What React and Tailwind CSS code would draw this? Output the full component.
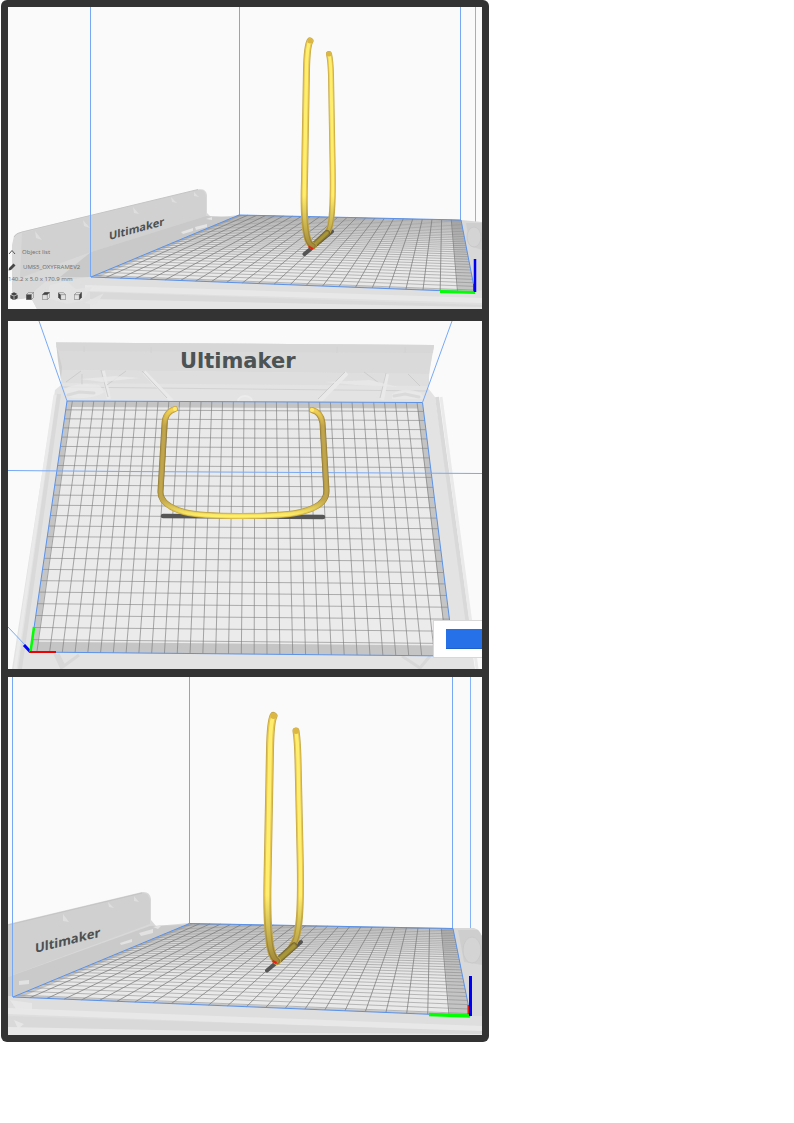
import React from "react";

// Maps the unit square onto a four-cornered plate: a = (0,0), b = (1,0), c = (1,1), d = (0,1).
function projector([a, b, c, d]) {
  const sx = a[0] - b[0] + c[0] - d[0];
  const sy = a[1] - b[1] + c[1] - d[1];
  const x1 = b[0] - c[0], x2 = d[0] - c[0];
  const y1 = b[1] - c[1], y2 = d[1] - c[1];
  const det = x1 * y2 - x2 * y1;
  const g = (sx * y2 - x2 * sy) / det;
  const h = (x1 * sy - sx * y1) / det;
  return (u, v) => {
    const w = g * u + h * v + 1;
    const x = ((b[0] - a[0] + g * b[0]) * u + (d[0] - a[0] + h * d[0]) * v + a[0]) / w;
    const y = ((b[1] - a[1] + g * b[1]) * u + (d[1] - a[1] + h * d[1]) * v + a[1]) / w;
    return `${x.toFixed(2)} ${y.toFixed(2)}`;
  };
}

function Plate({ id, corners, width, depth, uStart, vStart, far, near, line, crossLine, edge }) {
  const p = projector(corners);
  const quad = (u0, v0, u1, v1) => `M${p(u0, v0)}L${p(u1, v0)}L${p(u1, v1)}L${p(u0, v1)}Z`;
  let along = "";
  let across = "";
  for (let u = uStart; u < width; u += 10) along += `M${p(u / width, 0)}L${p(u / width, 1)}`;
  for (let v = vStart; v < depth; v += 10) across += `M${p(0, v / depth)}L${p(1, v / depth)}`;
  const [l, t, r, b] = edge;
  return (
    <g>
      <defs>
        <linearGradient id={id} x1="0" y1="0" x2="0" y2="1">
          <stop offset="0" stopColor={far} />
          <stop offset="0.6" stopColor={near} />
        </linearGradient>
      </defs>
      <path d={quad(0, 0, 1, 1)} fill={`url(#${id})`} />
      <path
        d={quad(0, 0, 1, 1) + quad(l, t, 1 - r, 1 - b)}
        fillRule="evenodd"
        fill="#8c8c8c"
        opacity="0.4"
      />
      <path d={along} fill="none" stroke="#7c7c7c" strokeWidth="0.9" opacity={line} />
      <path d={across} fill="none" stroke="#7c7c7c" strokeWidth="0.8" opacity={crossLine} />
      <path d={quad(0, 0, 1, 1)} fill="none" stroke="#5a92ea" strokeWidth="1" />
    </g>
  );
}

function Rod({ d, width, dark = "#c2a548", mid = "#e6c64c", light = "#ffee6e" }) {
  const common = { d, fill: "none", strokeLinecap: "round", strokeLinejoin: "round" };
  return (
    <g>
      <path {...common} stroke={dark} strokeWidth={width} />
      <path {...common} stroke={mid} strokeWidth={width * 0.8} />
      <path {...common} stroke={light} strokeWidth={width * 0.48} />
    </g>
  );
}

// Rod colour that falls off towards the plate, between two heights of the drawing.
function RodShade({ id, top, bottom }) {
  return (
    <defs>
      <linearGradient id={id} gradientUnits="userSpaceOnUse" x1="0" x2="0" y1={top} y2={bottom}>
        <stop offset="0" stopColor="#ffee6e" />
        <stop offset="1" stopColor="#a38b3a" />
      </linearGradient>
      <linearGradient id={`${id}-rim`} gradientUnits="userSpaceOnUse" x1="0" x2="0" y1={top} y2={bottom}>
        <stop offset="0" stopColor="#e6c64c" />
        <stop offset="1" stopColor="#8c7735" />
      </linearGradient>
    </defs>
  );
}

function SideView() {
  return (
    <svg viewBox="8 7 474 302" className="block h-auto w-full bg-[#fafafa]" role="img" aria-label="Side view">
      <path d="M239.500 7V215M460.500 7V220" stroke="#76a8f4" />
      <path d="M475.500 7V292" stroke="#86b2f7" />
      <path d="M12 245L14 236Q16 233 21 232L198 189.500Q206 188 207 195V213L212 218L239 215L461 220L482 222V309H37L31 298L12 300Z" fill="#d8d8d8" />
      <path d="M22 233L197 190Q205 188 206 197V216L91 252L20 278Z" fill="#d1d1d1" />
      <path d="M91 252L206 216L235 217L91 277L60 277Z" fill="#c9c9c9" />
      <path d="M14 237Q16 233 22 232L198 189.500" fill="none" stroke="#c5c5c5" />
      <path d="M35 231l7 9-6-2zM83 220l7 8-6-2zM133 207l6 7-5-1zM171 197l6 6-5-1zM194 192l5 5-5-1z" fill="#dedede" />
      <path d="M181 232l12-4v3l-10 3zM195 227l12-3v3l-11 3zM206 219l6-2v3z" fill="#e4e4e4" />
      <path d="M91 277L475 292L482 290V309H37L30 295L45 282Z" fill="#dfdfdf" />
      <path d="M85 285L482 298V303L85 291Z" fill="#e8e8e8" />
      <path d="M90 292L482 305V309H90Z" fill="#d9d9d9" />
      <path d="M90 299L380 305L482 307V309H90Z" fill="#e5e5e5" />
      <path d="M8 301L31 298L31 309H8Z" fill="#fafafa" />
      <path d="M50 285l16-4 10 8 16-2-10 14-15 3-20-6zM84 303l20-10-8 12z" fill="#e4e4e4" opacity="0.8" />
      <path d="M466 223H482V250L470 246Z" fill="#cecece" />
      <ellipse cx="474" cy="237" rx="7" ry="10" fill="#d4d4d4" stroke="#cacaca" />
      <text transform="translate(109 240) skewY(-15)" fill="#4b5153" fontFamily="'Noto Sans', sans-serif" fontWeight="700" fontSize="11">Ultimaker</text>
      <Plate id="plate-side" corners={[[239, 215], [461, 220], [475, 292], [91, 277]]} width={240} depth={330} uStart={10} vStart={5} far="#d2d2d2" near="#e9e9e9" line={0.85} crossLine={0.6} edge={[0.02, 0.02, 0.04, 0.01]} />
      <path d="M90.500 7V277" stroke="#76a8f4" />
      <path d="M304.500 254L332 231.500" stroke="#555" strokeWidth="4" strokeLinecap="round" />
      <RodShade id="rod-side" top={195} bottom={246} />
      <Rod d="M329 54Q330.500 60 331 75L332.500 160Q333.500 205 331 221Q329.500 231 326 234" width={6} mid="url(#rod-side-rim)" light="url(#rod-side)" />
      <Rod d="M314 245L327 233" width={6} dark="#6f6232" mid="#8e7c36" light="#a89739" />
      <Rod d="M310 41Q307 46 306.500 70L304.500 180Q303 225 308 240Q310 245 313 246" width={7} mid="url(#rod-side-rim)" light="url(#rod-side)" />
      <circle cx="310" cy="41" r="2.500" fill="#dcb744" />
      <circle cx="329" cy="54" r="2.500" fill="#dcb744" />
      <path d="M308.500 246.500L313 249" stroke="#f01a16" strokeWidth="2" />
      <path d="M474 284V292" stroke="#e51414" strokeWidth="2" />
      <path d="M440 291.500L475 292.500" stroke="#00ff00" strokeWidth="3" />
      <path d="M475 259V292" stroke="#0000f5" strokeWidth="2.500" />
    </svg>
  );
}

const TOP_ROD =
  "M175 409Q165 412 164.500 424L160.500 491Q159.500 505 184 512Q200 516 240 516Q285 516 301 512Q327 506 326.500 490L322.500 423Q321 412 312 410";

function TopView() {
  return (
    <svg viewBox="8 321 474 348" className="block h-auto w-full bg-[#fafafa]" role="img" aria-label="Top view">
      <path d="M56 342.500L434 345L430 367L428 388L435 397L475 669H12L55 390L61 385V372Z" fill="#e3e3e3" />
      <path d="M56 342.500L434 345L429 374L61 370Z" fill="#dadada" />
      <path d="M56 342.500L434 345L433 353L59 351Z" fill="#d7d7d7" />
      <path d="M61 370L429 374V386L62 383Z" fill="#dedede" />
      <path d="M56 342.500L62 367L61 380L58 361Z" fill="#cfcfcf" />
      <path d="M59 394L20 669M437 397L470 640" stroke="#d9d9d9" strokeWidth="4" fill="none" />
      <path d="M55 395L15 669M441 397L477 669" stroke="#eaeaea" strokeWidth="3" fill="none" />
      <path d="M84 346v6M151 347v6M337 347v6M405 347v6M62 387L245 389L428 391" stroke="#d2d2d2" fill="none" />
      <path d="M144 372L172 401M347 373L320 401M103 371L109 399M387 374L382 400" stroke="#e9e9e9" strokeWidth="4" fill="none" />
      <path d="M142 371L167 398M345 372L318 399M101 370L108 397M386 373L380 398M66 382L81 371M82 374V385M107 385L126 371M408 374L420 386M364 372L379 383" stroke="#cdcdcd" fill="none" />
      <path d="M64 389Q77 382 99 385L105 392Q90 401 67 397ZM392 394Q404 386 421 393L425 399H392ZM80 379l35-3 25 2-38 4zM325 382l45-2 28 7-42-2z" fill="#e9e9e9" opacity="0.8" />
      <path d="M68 395l11-3 15 1M394 396l11-2 14 3" stroke="#dadada" strokeWidth="3" strokeLinecap="round" fill="none" />
      <path d="M238 401a7 5 0 0 1 14 0" fill="#e7e7e7" stroke="#ececec" strokeWidth="2" />
      <path d="M58 654L64 666L79 655M55 654L62 669M402 656L420 668L430 656" stroke="#d8d8d8" strokeWidth="3" fill="none" />
      <text x="180" y="368" fill="#4b5355" fontFamily="'DejaVu Sans', sans-serif" fontWeight="700" fontSize="21">Ultimaker</text>
      <Plate id="plate-top" corners={[[67, 401], [422.5, 402.5], [454, 656], [30.5, 652]]} width={330} depth={240} uStart={5} vStart={10} far="#e9e9e9" near="#ebebeb" line={0.72} crossLine={0.72} edge={[0.014, 0.028, 0.016, 0.035]} />
      <path d="M39 321L67 401M452 321L422.500 402.500M8 470.500L126 471.500L482 473.500M8 627L26 646" stroke="#78a9f5" fill="none" />
      <path d="M163 516L323 517" stroke="#555" strokeWidth="4.500" strokeLinecap="round" />
      <defs>
        <linearGradient id="rod-top-rim" gradientUnits="userSpaceOnUse" x1="0" x2="0" y1="406" y2="518">
          <stop offset="0" stopColor="#c59f3a" />
          <stop offset="0.2" stopColor="#8a7638" />
          <stop offset="0.8" stopColor="#8a7638" />
          <stop offset="1" stopColor="#cdb046" />
        </linearGradient>
        <linearGradient id="rod-top-body" gradientUnits="userSpaceOnUse" x1="0" x2="0" y1="406" y2="516">
          <stop offset="0" stopColor="#f0c944" />
          <stop offset="0.18" stopColor="#b3973f" />
          <stop offset="0.8" stopColor="#b3973f" />
          <stop offset="1" stopColor="#f0d34f" />
        </linearGradient>
        <linearGradient id="rod-top-core" gradientUnits="userSpaceOnUse" x1="0" x2="0" y1="406" y2="516">
          <stop offset="0" stopColor="#ffdf58" />
          <stop offset="0.18" stopColor="#c1a54e" />
          <stop offset="0.85" stopColor="#c1a54e" />
          <stop offset="1" stopColor="#fff06a" />
        </linearGradient>
      </defs>
      <Rod d={TOP_ROD} width={6} dark="url(#rod-top-rim)" mid="url(#rod-top-body)" light="url(#rod-top-core)" />
      <circle cx="175" cy="409" r="2" fill="#ffeb70" />
      <circle cx="312" cy="410" r="2" fill="#ffeb70" />
      <path d="M24 645L30.500 652" stroke="#0000f5" strokeWidth="3" />
      <path d="M30.500 652L34 627" stroke="#00ff00" strokeWidth="2.500" />
      <path d="M30 652H56" stroke="#f00000" strokeWidth="2" />
    </svg>
  );
}

function CloseSideView() {
  return (
    <svg viewBox="8 677 474 358" className="block h-auto w-full bg-[#fafafa]" role="img" aria-label="Close side view">
      <path d="M189.500 677V923M452.500 677V928" stroke="#76a8f4" />
      <path d="M470.500 677V1016" stroke="#86b2f7" />
      <path d="M8 924L142 892Q150 891 151 899V920L156 926L189 923L453 928H474Q482 930 482 940V1035H8Z" fill="#d8d8d8" />
      <path d="M8 925L141 893Q149 892 150 901V924L13 975L8 977Z" fill="#d0d0d0" />
      <path d="M8 977L150 926L185 925L13 997H8Z" fill="#cacaca" />
      <path d="M8 925L142 893" stroke="#c4c4c4" />
      <path d="M63 914l6 8-6-1zM108 902l6 6-5-1zM134 896l5 6-5-1z" fill="#dedede" />
      <path d="M120 943l12-4v3l-11 3zM139 933l14-4v4l-12 3zM153 927l9-2-4 4zM19 981l10-1v4l-10 1z" fill="#e2e2e2" />
      <path d="M8 996L470 1016H482V1035H8Z" fill="#dedede" />
      <path d="M8 1008L482 1026V1032L8 1014Z" fill="#e8e8e8" />
      <path d="M8 1016L482 1031V1035H8Z" fill="#d9d9d9" />
      <path d="M8 1027L300 1033L482 1034V1035H8Z" fill="#e8e8e8" />
      <path d="M10 1000l22 3v8l-16-2zM14 1020l10 4-6 5z" fill="#e8e8e8" opacity="0.8" />
      <path d="M458 930H478L482 936V965L464 962Z" fill="#cecece" />
      <ellipse cx="472" cy="950" rx="9" ry="13" fill="#d4d4d4" stroke="#cacaca" />
      <text transform="translate(35 953) skewY(-14)" fill="#4b5153" fontFamily="'Noto Sans', sans-serif" fontWeight="700" fontSize="13">Ultimaker</text>
      <Plate id="plate-close" corners={[[189.5, 923.5], [453, 928.5], [470.5, 1016], [13, 997]]} width={240} depth={330} uStart={10} vStart={5} far="#d2d2d2" near="#e9e9e9" line={0.85} crossLine={0.6} edge={[0.02, 0.02, 0.04, 0.01]} />
      <path d="M12.500 677V997" stroke="#76a8f4" />
      <path d="M267 970.500L301 942" stroke="#555" strokeWidth="4" strokeLinecap="round" />
      <RodShade id="rod-close" top={895} bottom={960} />
      <Rod d="M296 731Q297.500 740 298 760L300 850Q301.500 910 298 929Q296.500 941 292 946" width={7} mid="url(#rod-close-rim)" light="url(#rod-close)" />
      <Rod d="M279 959.500L294 946" width={7} dark="#6f6232" mid="#8e7c36" light="#a89739" />
      <Rod d="M273.500 716Q270.500 722 270 750L267.500 880Q266.500 930 271 950Q273 958 277 961" width={8} mid="url(#rod-close-rim)" light="url(#rod-close)" />
      <circle cx="273.500" cy="716" r="3" fill="#dcb744" />
      <circle cx="296" cy="731" r="3" fill="#dcb744" />
      <path d="M272.500 961L276.500 963" stroke="#f01a16" strokeWidth="2.500" />
      <path d="M468.500 1005V1015" stroke="#e51414" strokeWidth="2" />
      <path d="M429 1014.500L470 1016" stroke="#00ff00" strokeWidth="3.500" />
      <path d="M470.500 976V1016" stroke="#0000f5" strokeWidth="3" />
    </svg>
  );
}

const VIEWS = [
  { name: "3D view", fill: "M6 0.500L11 3L6 5.500L1 3ZM0.500 4L5.500 6.500V12L0.500 9.500ZM11.500 4L6.500 6.500V12L11.500 9.500Z" },
  { name: "Front view", fill: "M0.500 4H8V11.500H0.500Z" },
  { name: "Top view", fill: "M0.500 4L4 0.500H11.500L8 4Z" },
  { name: "Left view", fill: "M0.500 1L4 4V11.500L0.500 8Z", flip: true },
  { name: "Right view", fill: "M8 4L11.500 0.500V8L8 11.500Z" },
];

function CubeIcon({ view, index }) {
  return (
    <svg viewBox="0 0 12 12" className="size-2">
      {index > 0 && (
        <path
          d={view.flip ? "M4 4H11.500V11.500H4ZM0.500 1H8L11.500 4M0.500 1V8L4 11.500" : "M0.500 4H8V11.500H0.500ZM0.500 4L4 0.500H11.500L8 4M11.500 0.500V8L8 11.500"}
          fill="none"
          stroke="#777"
          strokeWidth="0.9"
        />
      )}
      <path d={view.fill} fill="#444" />
    </svg>
  );
}

function ObjectPanel() {
  return (
    <div className="absolute bottom-0 left-0 flex flex-col pb-[9px] text-[6px] leading-2 text-[#737373]">
      <button type="button" className="flex items-center gap-1.5 text-left">
        <svg viewBox="0 0 8 8" className="size-2"><path d="M1 6L4 2.500L7 6" fill="none" stroke="#555" /></svg>
        Object list
      </button>
      <div className="mt-[7px] flex items-center gap-[7px]">
        <svg viewBox="0 0 8 8" className="size-2"><path d="M0.500 7.500L1 5L5.500 0.500L7.500 2.500L3 7Z" fill="#484848" /></svg>
        <span>UMS5_OXYFRAMEV2</span>
      </div>
      <p className="mt-1">140.2 x 5.0 x 170.9 mm</p>
      <div className="mt-[9px] flex gap-2 pl-0.5">
        {VIEWS.map((view, i) => (
          <button key={view.name} type="button" aria-label={view.name}>
            <CubeIcon view={view} index={i} />
          </button>
        ))}
      </div>
    </div>
  );
}

export default function App() {
  return (
    <div className="min-h-screen bg-white pl-px font-['Noto_Sans',sans-serif]">
      <main className="flex w-full max-w-[488px] flex-col rounded-md bg-[#333] p-[7px]">
        <section className="relative mb-3 overflow-hidden">
          <SideView />
          <ObjectPanel />
        </section>
        <section className="relative mb-2 overflow-hidden">
          <TopView />
          <div className="absolute right-0 bottom-[11px] flex border border-r-0 border-[#d8d8d8] bg-white py-2 pl-3">
            <button type="button" aria-label="Slice" className="h-5 w-9 border-b border-[#1c5fcb] bg-[#2671e8]" />
          </div>
        </section>
        <section className="overflow-hidden">
          <CloseSideView />
        </section>
      </main>
    </div>
  );
}
